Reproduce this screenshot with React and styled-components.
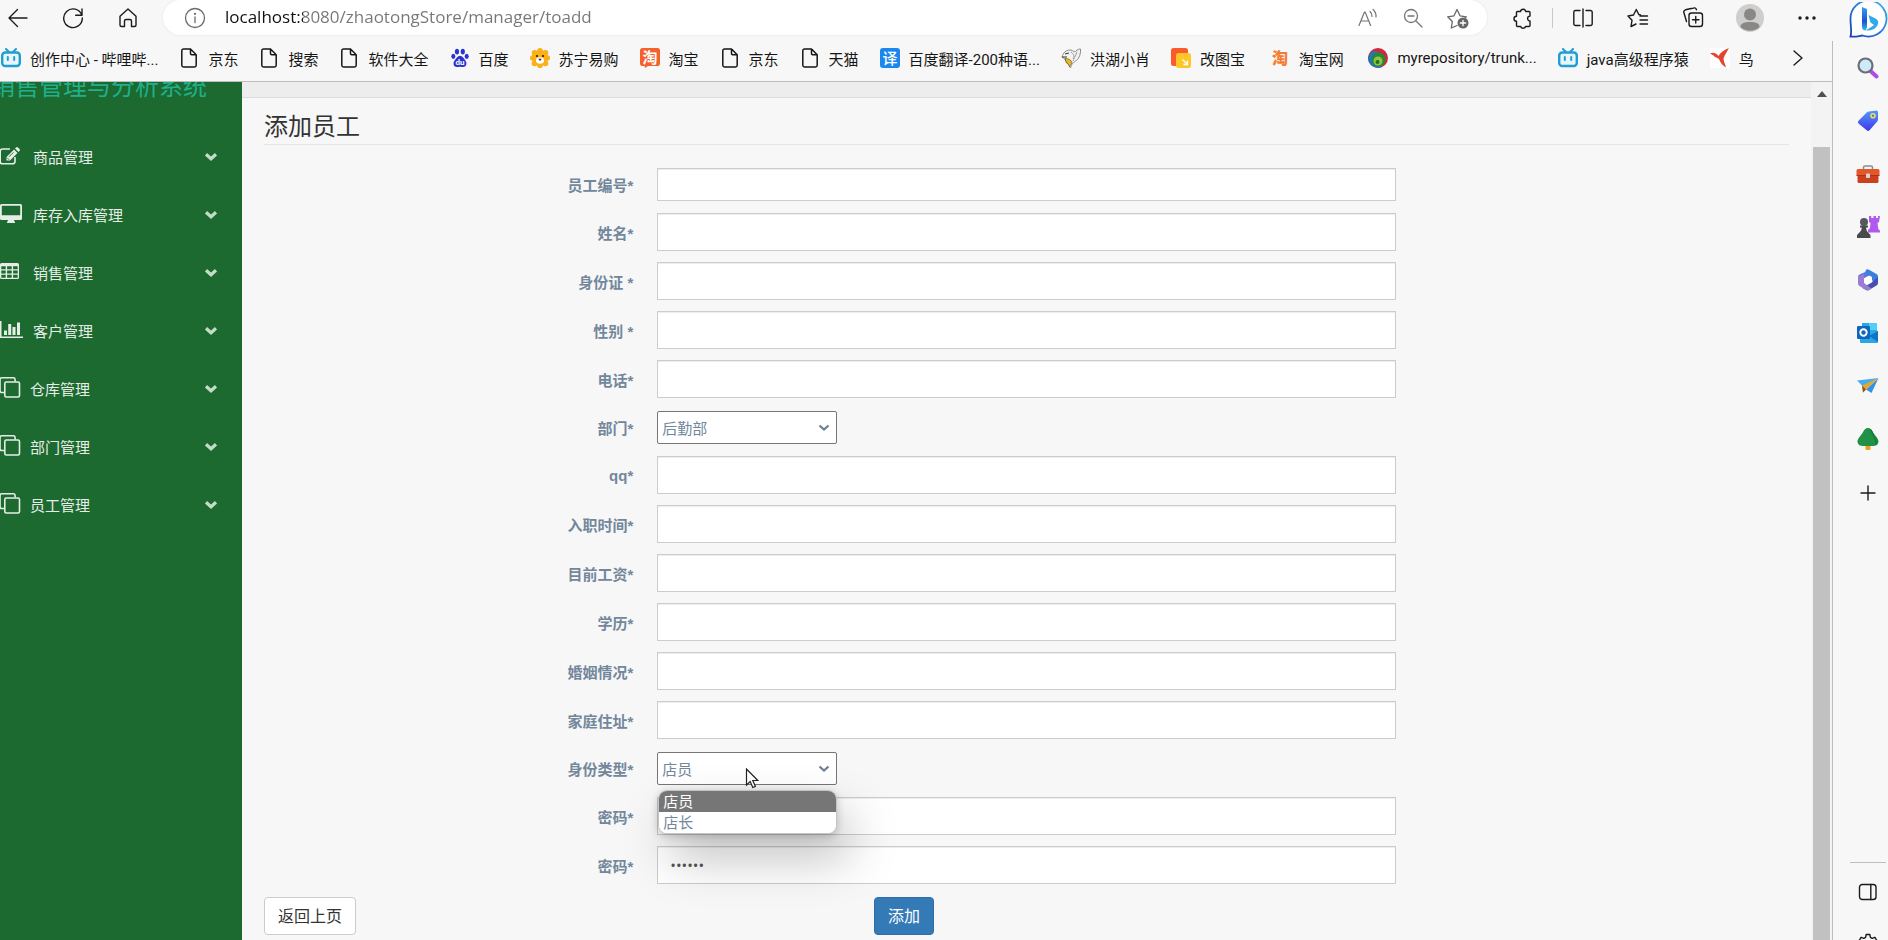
import React, { Component } from 'react';
import styled, { createGlobalStyle } from 'styled-components';

const GlobalStyle = createGlobalStyle`
	* {
		box-sizing: border-box;
	}

	body {
		margin: 0;
		background: #f7f7f7;
		font-family: "Open Sans", "Noto Sans CJK SC", sans-serif;
		font-size: 15px;
		color: #73879c;
	}

	button, input, select {
		font: inherit;
		margin: 0;
	}
`;

const Window = styled.div`
	display: flex;
	height: 100vh;
	overflow: hidden;
`;

const Left = styled.div`
	flex: 1;
	min-width: 0;
	display: flex;
	flex-direction: column;
`;

/* browser toolbar */

const Toolbar = styled.div`
	display: flex;
	align-items: center;
	height: 35px;
	padding-right: 7px;
`;

const Group = styled.div`
	display: flex;
	align-items: center;
	gap: ${props => props.$gap}px;
`;

const IconButton = styled.button`
	display: flex;
	align-items: center;
	justify-content: center;
	width: ${props => props.$width || 36}px;
	height: ${props => props.$height || 33}px;
	padding: 0;
	border: 0;
	background: none;
	color: ${props => props.$color || '#1b1b1b'};
	cursor: pointer;
`;

const AddressBar = styled.div`
	flex: 1;
	min-width: 0;
	display: flex;
	align-items: center;
	height: 35px;
	margin: 0 17px;
	padding: 0 11px 0 14px;
	border-radius: 18px;
	background: #fff;
	box-shadow: 0 0 3px rgba(0, 0, 0, 0.08);
`;

const Url = styled.input`
	flex: 1;
	min-width: 0;
	height: 31px;
	padding: 0 0 2px;
	margin-left: 12px;
	border: 0;
	outline: 0;
	font-size: 17px;
	color: transparent;
	background: linear-gradient(90deg, #111 78px, #767676 78px);
	background-clip: text;
`;

const Divider = styled.span`
	width: 1px;
	height: 20px;
	margin: 0 -7px;
	background: #c9c9c9;
`;

const Bookmarks = styled.nav`
	display: flex;
	align-items: center;
	gap: 21px;
	height: 47px;
	padding-left: 1px;
	border-bottom: 1px solid #bdbdbd;
	font-family: Roboto, "Noto Sans CJK SC", sans-serif;
	overflow: hidden;
`;

const Bookmark = styled.a`
	display: flex;
	align-items: center;
	gap: 9px;
	flex: none;
	color: #161616;
	text-decoration: none;
	white-space: pre;
`;

const More = styled(IconButton)`
	flex: none;
	margin-left: auto;
	margin-right: 16px;
`;

/* page */

const Page = styled.div`
	flex: 1;
	min-height: 0;
	display: flex;
`;

const Menu = styled.aside`
	flex: none;
	width: 242px;
	background: #1c6a2f;
	color: #e6ede7;
	overflow: hidden;
`;

const SiteTitle = styled.div`
	display: flex;
	justify-content: flex-end;
	align-items: flex-end;
	height: 18px;
	padding-right: 35px;
	font-size: 24px;
	line-height: 28px;
	white-space: nowrap;
	color: #1fb08c;
	overflow: hidden;
`;

const MenuList = styled.ul`
	list-style: none;
	margin: 27px 0 0;
	padding: 0;
`;

const MenuLink = styled.a`
	display: flex;
	align-items: center;
	gap: ${props => props.$narrow ? 6 : 9}px;
	height: 58px;
	padding-right: 24px;
	color: inherit;
	text-decoration: none;

	svg:last-child {
		margin-left: auto;
	}
`;

const Main = styled.main`
	flex: 1;
	min-width: 0;
	overflow: hidden;
`;

const Strip = styled.div`
	height: 16px;
	background: #ededed;
	border-bottom: 1px solid #d9dee4;
`;

const Panel = styled.div`
	padding: 0 22px;
`;

const Title = styled.h2`
	margin: 0 0 23px;
	padding: 11px 0 1px;
	border-bottom: 1px solid #e3e5e8;
	font-size: 24px;
	line-height: 34px;
	font-weight: 400;
	color: #333;
`;

const Form = styled.form`
	display: flex;
	flex-direction: column;
	gap: 11px;
`;

const Row = styled.div`
	display: grid;
	grid-template-columns: 25% 50%;
	align-items: center;
	padding: ${props => props.$pad || '0'};
`;

const Label = styled.label`
	padding-right: 12px;
	text-align: right;
	font-family: "Liberation Sans", "Noto Sans CJK SC", sans-serif;
	font-weight: 700;
`;

const Field = styled.div`
	position: relative;
	display: flex;
	padding: 0 12px;
`;

const Input = styled.input`
	width: 100%;
	height: ${props => props.$short ? 33 : 38}px;
	padding: 6px 12px;
	border: 1px solid #ccc;
	border-radius: 0;
	background: #fff;
	box-shadow: inset 0 1px 1px rgba(0, 0, 0, 0.075);
	color: #555;
	outline: 0;
`;

const Select = styled.select`
	appearance: none;
	width: 180px;
	height: 33px;
	padding: 0 4px;
	border: 1px solid #767676;
	border-radius: 2px;
	background: #fff;
	color: #73879c;
	outline: 0;
`;

const SelectArrow = styled.svg`
	position: absolute;
	left: 173px;
	top: 13px;
	pointer-events: none;
`;

const Options = styled.ul`
	position: absolute;
	z-index: 2;
	left: 13px;
	top: 38px;
	width: 179px;
	margin: 0;
	padding: 0;
	list-style: none;
	border: 1px solid #c4c4c4;
	border-radius: 9px;
	background: #fff;
	box-shadow: 12px 24px 48px rgba(0, 0, 0, 0.26), 0 2px 8px rgba(0, 0, 0, 0.2);
	overflow: hidden;
`;

const Option = styled.li`
	padding: 0 4px;
	line-height: 21px;
	background: ${props => props.$active ? '#767676' : '#fff'};
	color: ${props => props.$active ? '#fff' : '#73879c'};
`;

const Pointer = styled.svg`
	position: absolute;
	z-index: 3;
	left: 100px;
	top: 16px;
	pointer-events: none;
`;

const Actions = styled.div`
	display: grid;
	grid-template-columns: 40% auto;
	justify-items: start;
	margin-top: 2px;
`;

const Button = styled.button`
	height: 38px;
	padding: 0 13px;
	border: 1px solid ${props => props.$primary ? '#2e6da4' : '#ccc'};
	border-radius: 4px;
	background: ${props => props.$primary ? '#337ab7' : '#fff'};
	color: ${props => props.$primary ? '#fff' : '#333'};
	font-size: 16px;
	line-height: 24px;
	cursor: pointer;
`;

const Scrollbar = styled.div`
	flex: none;
	display: flex;
	flex-direction: column;
	align-items: center;
	width: 21px;
	padding-top: 9px;
	background: #f3f3f3;
`;

const Thumb = styled.div`
	flex: 1;
	width: 17px;
	margin-top: 50px;
	background: #c1c1c1;
`;

/* browser side rail */

const Rail = styled.aside`
	flex: none;
	display: flex;
	flex-direction: column;
	align-items: flex-end;
	width: 56px;
`;

const RailBody = styled.div`
	flex: 1;
	min-height: 0;
	width: 100%;
	display: flex;
	flex-direction: column;
	align-items: flex-end;
	padding-right: 2px;
	border-left: 1px solid #bdbdbd;
`;

const RailBottom = styled.div`
	height: 78px;
	margin-top: auto;
	border-top: 1px solid #bdbdbd;
	overflow: hidden;
`;

const Line = ({ w = 20, h = w, sw = 1.4, box, children }) => (
	<svg width={w} height={h} viewBox={box || `0 0 ${w} ${h}`} fill="none" stroke="currentColor" strokeWidth={sw} strokeLinecap="round" strokeLinejoin="round" aria-hidden="true">
		{children}
	</svg>
);

const Fill = ({ w = 20, h = w, box, children }) => (
	<svg width={w} height={h} viewBox={box || `0 0 ${w} ${h}`} fill="currentColor" aria-hidden="true">
		{children}
	</svg>
);

const icons = {
	back: <Line w={20}><path d="M19 10H1M9.500 1.500L1 10l8.500 8.500" /></Line>,
	reload: <Line w={22}><path d="M19.800 8.200A9.300 9.300 0 1 0 20.300 11M20 2v6.300h-6.300" /></Line>,
	home: <Line w={20} h={21}><path d="M2 9.200L10 2l8 7.200V18a1.500 1.500 0 0 1-1.500 1.500h-3V14a1.500 1.500 0 0 0-1.500-1.500h-4A1.500 1.500 0 0 0 6.500 14v5.500H3.500A1.500 1.500 0 0 1 2 18z" /></Line>,
	info: <Line w={22} sw={1.3}><circle cx="11" cy="11" r="9.500" /><path d="M11 10v5.500" /><circle cx="11" cy="6.800" r=".5" fill="currentColor" /></Line>,
	read: <Line w={20} sw={1.2}><path d="M1 17.500L6.500 4h.6l5.500 13.500M3 13h7.600M12 3.500a6 6 0 0 1 2 5M15 1.500a9 9 0 0 1 3 7.500" /></Line>,
	zoomOut: <Line w={20} sw={1.3}><circle cx="8" cy="8" r="6.500" /><path d="M5 8h6M13 13l6 6" /></Line>,
	starAdd: (
		<Line w={24} h={22} sw={1.3}>
			<path d="M11 18.500l-5.700 2.500 1-6.500L1.700 9.800l6.300-1L11 2.500l3 6.300 6.300 1-1.500 1.500" />
			<circle cx="17" cy="16" r="5.500" fill="currentColor" stroke="none" />
			<path d="M17 13.300v5.400M14.300 16h5.400" stroke="#fff" />
		</Line>
	),
	puzzle: <Line w={22}><path d="M7 4.500h2.500a2.700 2.700 0 0 1 5.300 0H18a1 1 0 0 1 1 1v3.600a2.400 2.400 0 0 0 0 4.800v4.600a1 1 0 0 1-1 1h-3.500a2.500 2.500 0 0 1-4.800 0H6.500a1 1 0 0 1-1-1v-4.300a2.500 2.500 0 0 1 0-5V5.500a1 1 0 0 1 1-1z" /></Line>,
	split: <Line w={22} h={20}><path d="M8 2.500H3.500A1.700 1.700 0 0 0 1.800 4.200v11.600a1.700 1.700 0 0 0 1.700 1.700H8M14 2.500h4.500a1.700 1.700 0 0 1 1.700 1.700v11.600a1.700 1.700 0 0 1-1.700 1.700H14M11 1v18" /></Line>,
	favorites: <Line w={22} h={20}><path d="M13.500 7L11.800 6.500 9.300 1.500 6.500 7l-5.500 1 4 4.300-1 6.200 5-2.500M13 8h7.500M13 12h7.500M13 16h7.500" /></Line>,
	collections: <Line w={22} h={21}><rect x="7" y="6" width="13.500" height="13.500" rx="2.500" /><path d="M13.750 9.500v6.500M10.500 12.750H17M4.500 14.500L2 6a2.500 2.500 0 0 1 1.500-3.200L11.500 1a2.500 2.500 0 0 1 3 1.700" /></Line>,
	user: (
		<Fill w={28}>
			<circle cx="14" cy="14" r="14" fill="#cfcecd" />
			<circle cx="14" cy="10.500" r="6" fill="#8a8886" />
			<path d="M4.500 23c0-3.500 3-5 9.500-5s9.500 1.500 9.500 5a14 14 0 0 1-19 0z" fill="#8a8886" />
		</Fill>
	),
	dots: <Fill w={18} h={4}><circle cx="2" cy="2" r="1.700" /><circle cx="9" cy="2" r="1.700" /><circle cx="16" cy="2" r="1.700" /></Fill>,
	chevronRight: <Line w={12} h={18}><path d="M2 2l8 7-8 7" /></Line>,
	bili: (
		<Fill w={20}>
			<path d="M5 1l3 3M15 1l-3 3" stroke="#1f9fd0" strokeWidth="2" strokeLinecap="round" />
			<rect x="1.200" y="4.500" width="17.600" height="13.500" rx="3" fill="#e8f6fb" stroke="#1f9fd0" strokeWidth="2.400" />
			<path d="M6.800 9v3M13.200 9v3" stroke="#1f9fd0" strokeWidth="2" strokeLinecap="round" />
		</Fill>
	),
	file: <Line w={20} box="0 0 20 20" sw={1.5}><path d="M11.500 1H4.500A1.700 1.700 0 0 0 2.800 2.700v14.600A1.700 1.700 0 0 0 4.500 19h11a1.700 1.700 0 0 0 1.700-1.700V6.700zM11.500 1v4.500a1.200 1.200 0 0 0 1.200 1.200h4.500" /></Line>,
	baidu: (
		<Fill w={20}>
			<g fill="#2a32d0">
				<ellipse cx="7" cy="3.600" rx="2.100" ry="2.900" /><ellipse cx="12.800" cy="3.600" rx="2.100" ry="2.900" />
				<ellipse cx="3.300" cy="8.300" rx="2" ry="2.600" /><ellipse cx="16.700" cy="8.300" rx="2" ry="2.600" />
				<path d="M10 7.800c2.500 0 3.500 2.500 5 4.200 2.300 2.300 2 7-2 7-1.300 0-2-.3-3-.3s-1.700.3-3 .3c-4 0-4.300-4.700-2-7 1.500-1.700 2.500-4.200 5-4.200z" />
			</g>
			<text x="10" y="17" fontSize="8" fontWeight="700" textAnchor="middle" fill="#fff">du</text>
		</Fill>
	),
	suning: (
		<Fill w={20}>
			<g fill="#fbb017">
				<circle cx="10" cy="10" r="8" />
				<circle cx="10" cy="2.800" r="2.800" /><circle cx="15.500" cy="4.800" r="2.800" /><circle cx="17.200" cy="10" r="2.800" /><circle cx="15.500" cy="15.500" r="2.800" />
				<circle cx="10" cy="17.200" r="2.800" /><circle cx="4.500" cy="15.500" r="2.800" /><circle cx="2.800" cy="10" r="2.800" /><circle cx="4.500" cy="4.800" r="2.800" />
			</g>
			<ellipse cx="10" cy="12.500" rx="4" ry="3.200" fill="#fff" />
			<circle cx="7" cy="8" r="1.100" fill="#222" /><circle cx="13" cy="8" r="1.100" fill="#222" />
			<path d="M8.300 10.800h3.400L10 13z" fill="#222" />
		</Fill>
	),
	taobao: (
		<Fill w={20}>
			<path d="M2.500 0h15A2.500 2.500 0 0 1 20 2.500v13a2.500 2.500 0 0 1-2.500 2.500H8l-3 2-.5-2h-2A2.500 2.500 0 0 1 0 15.500v-13A2.500 2.500 0 0 1 2.500 0z" fill="#f4612c" />
			<text x="10" y="14.500" fontSize="15" fontWeight="700" textAnchor="middle" fill="#fff">淘</text>
		</Fill>
	),
	translate: (
		<Fill w={20}>
			<rect width="20" height="20" rx="3" fill="#1a86ee" />
			<text x="10" y="15.500" fontSize="15" fontWeight="500" textAnchor="middle" fill="#fff">译</text>
		</Fill>
	),
	bird: (
		<Fill w={20}>
			<path d="M1 9c1-4 4-7 8-7 3 0 4 3 6 1 1.500-1.500 3-2 4.500-2 .5 4-1 9-4 11.500-3 2-5 3-6 7.500-1-4-5-4-5-8-1-1.500-2-2-3.500-3z" fill="#f2f2f2" stroke="#8b8b8b" strokeWidth="1" />
			<path d="M4 10.500c3 0 6 1 7 4-1 2-2 3-2.500 4-1-3-4-4-4.500-8z" fill="#e8b923" stroke="#665522" strokeWidth=".7" />
			<path d="M10 4c3 2 4 5 2 9M16 4c-1 3-2 5-4 7" stroke="#9a9a9a" fill="none" /><path d="M4 6l4-1M1 9l5 0" stroke="#333" />
		</Fill>
	),
	gaitu: (
		<Fill w={20}>
			<rect width="17" height="18" rx="2.500" fill="#fb5b2c" />
			<rect x="5" y="5" width="15" height="15" rx="2.500" fill="#ffc62a" />
			<path d="M11.500 11.500l5 5M16.500 12.500v4h-4" stroke="#fff" strokeWidth="1.300" fill="none" />
		</Fill>
	),
	taobaoText: <Fill w={20}><text x="10" y="15.500" fontSize="16" fontWeight="900" textAnchor="middle" fill="#f47d31">淘</text></Fill>,
	repo: (
		<Fill w={20}>
			<circle cx="10" cy="10" r="10" fill="#d0273d" />
			<path d="M0 10a10 10 0 0 0 14 9L10 4C5 2 1 5 0 10z" fill="#2277b8" />
			<circle cx="10.500" cy="11.500" r="7" fill="#28873a" /><circle cx="10" cy="13" r="4.500" fill="#8cc63f" /><circle cx="9.500" cy="14" r="2" fill="#286b2e" />
		</Fill>
	),
	wing: (
		<Fill w={20}>
			<rect width="20" height="20" fill="#fff" />
			<path d="M0 5.500c3-1.500 6-.5 8.500 2.500C11 4 14 2 19 0c-2 4-4.500 7-5.500 10.500 0 3 2 6 2.500 9-3-1.500-6-5-7-8.500C7 9.500 4 9 3.500 7.500z" fill="#e2462f" />
		</Fill>
	),
	edit: <Fill w={24} h={20}><path d="M15 11v4.500a2.300 2.300 0 0 1-2.300 2.300H2.500A2.300 2.300 0 0 1 .2 15.500V5.300A2.300 2.300 0 0 1 2.500 3H10" fill="none" stroke="currentColor" strokeWidth="1.600" /><path d="M6.500 14.500V11l7.500-7.500 3.500 3.500-7.500 7.500zM15 2.500l1-1a1.300 1.300 0 0 1 2 0l1.500 1.500a1.300 1.300 0 0 1 0 2l-1 1z" /><path d="M9 10.800l4.500-4.500M7.200 11.800l2 2" stroke="#1c6a2f" strokeWidth=".9" /></Fill>,
	desktop: <Fill w={24} h={20}><path d="M1.500 0h19A1.500 1.500 0 0 1 22 1.500v13a1.500 1.500 0 0 1-1.500 1.500H14l1.200 3H6.800L8 16H1.500A1.500 1.500 0 0 1 0 14.500v-13A1.500 1.500 0 0 1 1.500 0zm.3 1.700v9.600h18.400V1.700z" fillRule="evenodd" /></Fill>,
	table: <Fill w={24} h={20}><path d="M1.500 1h16A1.500 1.500 0 0 1 19 2.500v13a1.500 1.500 0 0 1-1.500 1.500h-16A1.500 1.500 0 0 1 0 15.500v-13A1.500 1.500 0 0 1 1.500 1zM1.300 4.300v3h4.400v-3zm5.800 0v3h4.600v-3zm6 0v3h4.600v-3zM1.300 8.500v3h4.400v-3zm5.800 0v3h4.600v-3zm6 0v3h4.600v-3zM1.300 12.700v3h4.400v-3zm5.800 0v3h4.600v-3zm6 0v3h4.600v-3z" fillRule="evenodd" /></Fill>,
	chart: <Fill w={24} h={20}><path d="M0 1h1.500v15.500H23V18H0zM4 10.500h3V15H4zM8.200 4h3v11h-3zM12.500 7h3v8h-3zM17 2.500h3V15h-3z" /></Fill>,
	clone: <Line w={24} sw={1.6}><rect x="4.800" y="6" width="14.700" height="15" rx="1.500" /><path d="M4 16.500H1.800A1.800 1.800 0 0 1 0 14.700V3.500A1.800 1.800 0 0 1 1.800 1.800h11.500a1.800 1.800 0 0 1 1.800 1.700V5" /></Line>,
	chevronDown: <Fill w={14} h={12}><path d="M2 4.200l5 4.600 5-4.600" fill="none" stroke="#c3dbc9" strokeWidth="3.200" /></Fill>,
	bing: (
		<Fill w={39} h={37}>
			<defs>
				<linearGradient id="bubble" x1="0" y1="1" x2="1" y2="0"><stop offset="0" stopColor="#1b3fb5" /><stop offset=".5" stopColor="#2378dd" /><stop offset="1" stopColor="#3bb5ec" /></linearGradient>
				<linearGradient id="bing" x1="0" y1="0" x2="0" y2="1"><stop offset="0" stopColor="#3a9df0" /><stop offset=".6" stopColor="#1b50d8" /><stop offset="1" stopColor="#2ec0ee" /></linearGradient>
			</defs>
			<path d="M1.500 34.500C3 30 1.500 24 1.500 17a18 18 0 1 1 12 16.500C9.500 34 6 35.300 1.500 34.500z" fill="#fff" stroke="url(#bubble)" strokeWidth="1.800" />
			<path d="M13 5l5 2v18l-1 3.500c-3 0-4-1.500-4-4z" fill="url(#bing)" />
			<path d="M19.500 13l7 3.500c3 1.500 3.500 4.500 1.500 7.500-2.500 4-7 5-11 4.500l8-5.500-3.500-2.500z" fill="#31a9eb" />
		</Fill>
	),
	search: (
		<Fill w={22}>
			<path d="M13.500 14l6 5.500" stroke="#b04be8" strokeWidth="4" strokeLinecap="round" />
			<circle cx="8.500" cy="8.500" r="7" fill="#cdeaf8" stroke="#6b6e73" strokeWidth="2.200" />
		</Fill>
	),
	tag: (
		<Fill w={22}>
			<defs><linearGradient id="tag" x1="0" y1="0" x2="0" y2="1"><stop offset="0" stopColor="#4f9bf5" /><stop offset="1" stopColor="#4238ee" /></linearGradient></defs>
			<path d="M12 1.500l7.500-1A1.500 1.500 0 0 1 21 2v7.500a3 3 0 0 1-.8 2l-7.700 8.700a2 2 0 0 1-2.800 0L1.500 13.500a2 2 0 0 1 0-2.800L9.700 2.500a4 4 0 0 1 2.300-1z" fill="url(#tag)" />
			<circle cx="16" cy="5.800" r="2.800" fill="#f6d860" /><circle cx="16" cy="5.800" r="1.200" fill="#5a7be0" />
		</Fill>
	),
	toolbox: (
		<Fill w={24} h={20}>
			<path d="M7.500 5V3.500A1.500 1.500 0 0 1 9 2h6a1.500 1.500 0 0 1 1.500 1.500V5" fill="none" stroke="#8a8d90" strokeWidth="1.600" />
			<path d="M1.500 10h21v7.500a1.500 1.500 0 0 1-1.500 1.500H3a1.500 1.500 0 0 1-1.500-1.500z" fill="#c9421d" />
			<rect x=".5" y="5" width="23" height="7" rx="1.500" fill="#e4572b" /><path d="M.5 11.500h23" stroke="#a83415" />
			<rect x="10" y="9.500" width="4" height="4.500" rx=".8" fill="#d5d6d8" />
		</Fill>
	),
	chess: (
		<Fill w={24} h={23}>
			<path d="M13 1h2.200v2h2.300V1h2.500v2h2V1h2l-1 6-1.500 1 .8 6 2 2v1.500H12V15l2-2 .5-5L13 7z" fill="#b258f0" />
			<circle cx="8" cy="7" r="4" fill="#55585c" />
			<path d="M4 10.500h8v2h-1.800c0 3 .8 4 3.300 6.500a2 2 0 0 1 1 2V23H1v-2a2 2 0 0 1 1-2c2.500-2.500 3.700-3.500 3.700-6.500H4z" fill="#484a4e" />
		</Fill>
	),
	office: (
		<Fill w={22}>
			<path d="M12.500 1.200L3.500 5A3.500 3.500 0 0 0 1 8.500V14l6 1V9.500l7-4z" fill="#5b78dc" />
			<path d="M9 .8a3 3 0 0 1 3 0l7.500 4.200A3 3 0 0 1 21 7.800V14l-6-2.500V8L8 4z" fill="#3d7fe0" />
			<path d="M21 8v6a3 3 0 0 1-1.500 2.600L12 21a3 3 0 0 1-3 0l-3.500-2 9.500-6z" fill="#4a50ac" />
			<path d="M1 8v6.500a3 3 0 0 0 1.500 2.600L9 21a3 3 0 0 0 3 0l2.500-1.500L7 14V5z" fill="#9a7cd4" />
			<path d="M11 7.200l4 2v4l-4 2.300-4-2.300v-4z" fill="#fff" />
		</Fill>
	),
	outlook: (
		<Fill w={22}>
			<rect x="5" y="1" width="15" height="13" fill="#28a8ea" /><rect x="12" y="1" width="8" height="7" fill="#50d0f6" />
			<path d="M3 10l10 4 8-5v11a1 1 0 0 1-1 1H4a1 1 0 0 1-1-1z" fill="#2ba5e6" /><path d="M21 9v11l-9-6z" fill="#1273c4" />
			<rect x="0" y="4" width="13" height="13" rx="1" fill="#0f66bd" />
			<circle cx="6.500" cy="10.500" r="3.200" fill="none" stroke="#fff" strokeWidth="1.900" />
		</Fill>
	),
	plane: (
		<Fill w={22} h={18}>
			<path d="M0 3.500L21.500 1 6 9.500z" fill="#43aef2" /><path d="M21.500 1L14.500 16 9 12.500z" fill="#2f93e6" /><path d="M5 8.500L21.500 1 9 12.500l-3 3z" fill="#e8a62c" /><path d="M6 15.500L5 8.500l4 4z" fill="#8a5a18" />
		</Fill>
	),
	tree: (
		<Fill w={22}>
			<rect x="8.500" y="15" width="5" height="7" rx="1" fill="#eaa021" />
			<path d="M11 0c3 0 4 2.500 5.500 5S22 11 21.500 14s-3 4-5.500 4H6c-2.500 0-5-1-5.500-4S4 7.500 5.500 5 8 0 11 0z" fill="#209145" />
			<path d="M13 1c3 1 3 5 5 8s3 6 0 8c2-6-3-9-5-16z" fill="#15763a" />
		</Fill>
	),
	plus: <Line w={16}><path d="M8 1v14M1 8h14" /></Line>,
	panel: <Line w={20} h={18}><rect x="1.500" y="1.500" width="16.500" height="15" rx="2.800" /><path d="M12.800 1.500v15" /></Line>,
	gear: <Line w={22}><circle cx="11" cy="11" r="3" /><path d="M9.200 1.500h3.600l.6 2.800 1.800 1 2.700-1 1.800 3-2 2v2.400l2 2-1.800 3-2.700-.9-1.800 1-.6 2.900H9.200l-.6-2.900-1.800-1-2.700.9-1.800-3 2-2V9.300l-2-2 1.800-3 2.700 1 1.800-1z" /></Line>,
};

const bookmarks = [
	['bili', '创作中心 - 哔哩哔...'],
	['file', '京东'],
	['file', '搜索'],
	['file', '软件大全'],
	['baidu', '百度'],
	['suning', '苏宁易购'],
	['taobao', '淘宝'],
	['file', '京东'],
	['file', '天猫'],
	['translate', '百度翻译-200种语...'],
	['bird', '洪湖小肖'],
	['gaitu', '改图宝 '],
	['taobaoText', '淘宝网 '],
	['repo', 'myrepository/trunk...'],
	['bili', 'java高级程序猿'],
	['wing', '鸟'],
];

const menu = [
	['edit', '商品管理'],
	['desktop', '库存入库管理'],
	['table', '销售管理'],
	['chart', '客户管理'],
	['clone', '仓库管理'],
	['clone', '部门管理'],
	['clone', '员工管理'],
];

const rail = [
	['search', '搜索'],
	['tag', '购物'],
	['toolbox', '工具'],
	['chess', '游戏'],
	['office', 'Microsoft 365'],
	['outlook', 'Outlook'],
	['plane', 'Drop'],
	['tree', 'E-tree'],
];

const fields = [
	{ id: 'empno', label: '员工编号*', short: true },
	{ id: 'name', label: '姓名*' },
	{ id: 'idcard', label: '身份证 *' },
	{ id: 'sex', label: '性别 *' },
	{ id: 'phone', label: '电话*' },
	{ id: 'dept', label: '部门*', options: ['后勤部'] },
	{ id: 'qq', label: 'qq*' },
	{ id: 'hiredate', label: '入职时间*' },
	{ id: 'salary', label: '目前工资*' },
	{ id: 'education', label: '学历*' },
	{ id: 'marriage', label: '婚姻情况*' },
	{ id: 'address', label: '家庭住址*' },
	{ id: 'role', label: '身份类型*', options: ['店员', '店长'], open: true },
	{ id: 'account', label: '密码*' },
	{ id: 'password', label: '密码*', type: 'password', value: '123456' },
];

class SelectField extends Component {
	render() {
		const { id, options, open } = this.props.item;
		return (
			<Field>
				<Select id={id} defaultValue={options[0]}>
					{options.map(option => <option key={option}>{option}</option>)}
				</Select>
				<SelectArrow width="12" height="8" viewBox="0 0 12 8" fill="none" stroke="#6f7f90" strokeWidth="2.200">
					<path d="M1.500 1.500L6 5.500l4.500-4" />
				</SelectArrow>
				{open &&
					<Options role="listbox" aria-label="身份类型">
						{options.map((option, i) => (
							<Option key={option} role="option" aria-selected={i === 0} $active={i === 0}>{option}</Option>
						))}
					</Options>}
				{open &&
					<Pointer width="14" height="21" viewBox="0 0 14 21">
						<path d="M1.500 1v16l3.700-3.500 2.600 6 2.600-1.100-2.600-5.900h5z" fill="#fff" stroke="#222" strokeWidth="1.200" />
					</Pointer>}
			</Field>
		);
	}
}

class FormRow extends Component {
	render() {
		const { item } = this.props;
		let pad = '0';
		if (item.short) pad = '0 0 1px';
		if (item.options) pad = '2px 0 1px';
		return (
			<Row $pad={pad}>
				<Label htmlFor={item.id}>{item.label}</Label>
				{item.options
					? <SelectField item={item} />
					: <Field>
						<Input id={item.id} type={item.type || 'text'} defaultValue={item.value} $short={item.short} />
					</Field>}
			</Row>
		);
	}
}

class App extends Component {
	render() {
		return (
			<Window>
				<GlobalStyle />
				<Left>
					<Toolbar>
						<Group $gap={19}>
							<IconButton aria-label="返回">{icons.back}</IconButton>
							<IconButton aria-label="刷新">{icons.reload}</IconButton>
							<IconButton aria-label="主页">{icons.home}</IconButton>
						</Group>
						<AddressBar>
							<IconButton aria-label="站点信息" $color="#6b6b6b">{icons.info}</IconButton>
							<Url aria-label="地址" defaultValue="localhost:8080/zhaotongStore/manager/toadd" />
							<Group $gap={9}>
								<IconButton aria-label="朗读" $color="#757575">{icons.read}</IconButton>
								<IconButton aria-label="缩小" $color="#757575">{icons.zoomOut}</IconButton>
								<IconButton aria-label="收藏" $color="#666">{icons.starAdd}</IconButton>
							</Group>
						</AddressBar>
						<Group $gap={19}>
							<IconButton aria-label="扩展">{icons.puzzle}</IconButton>
							<Divider />
							<IconButton aria-label="分屏">{icons.split}</IconButton>
							<IconButton aria-label="收藏夹">{icons.favorites}</IconButton>
							<IconButton aria-label="集锦">{icons.collections}</IconButton>
							<IconButton aria-label="个人资料" $width={40}>{icons.user}</IconButton>
							<IconButton aria-label="设置及其他">{icons.dots}</IconButton>
						</Group>
					</Toolbar>
					<Bookmarks>
						{bookmarks.map(([icon, text], i) => (
							<Bookmark key={i} href="#">{icons[icon]}{text}</Bookmark>
						))}
						<More aria-label="更多">{icons.chevronRight}</More>
					</Bookmarks>
					<Page>
						<Menu>
							<SiteTitle>销售管理与分析系统</SiteTitle>
							<MenuList>
								{menu.map(([icon, text]) => (
									<li key={text}>
										<MenuLink href="#" $narrow={icon === 'clone'}>
											{icons[icon]}{text}{icons.chevronDown}
										</MenuLink>
									</li>
								))}
							</MenuList>
						</Menu>
						<Main>
							<Strip />
							<Panel>
								<Title>添加员工</Title>
								<Form onSubmit={e => e.preventDefault()}>
									{fields.map(item => <FormRow key={item.id} item={item} />)}
									<Actions>
										<Button type="button">返回上页</Button>
										<Button type="submit" $primary>添加</Button>
									</Actions>
								</Form>
							</Panel>
						</Main>
						<Scrollbar>
							<Fill w={10} h={6}><path d="M5 0l5 6H0z" fill="#505050" /></Fill>
							<Thumb />
						</Scrollbar>
					</Page>
				</Left>
				<Rail>
					<IconButton aria-label="Bing" $width={39} $height={41}>{icons.bing}</IconButton>
					<RailBody>
						{rail.map(([icon, text]) => (
							<IconButton key={icon} aria-label={text} $height={53}>{icons[icon]}</IconButton>
						))}
						<IconButton aria-label="自定义" $height={56}>{icons.plus}</IconButton>
						<RailBottom>
							<IconButton aria-label="侧边栏" $height={58}>{icons.panel}</IconButton>
							<IconButton aria-label="设置" $height={46}>{icons.gear}</IconButton>
						</RailBottom>
					</RailBody>
				</Rail>
			</Window>
		);
	}
}

export default App;
